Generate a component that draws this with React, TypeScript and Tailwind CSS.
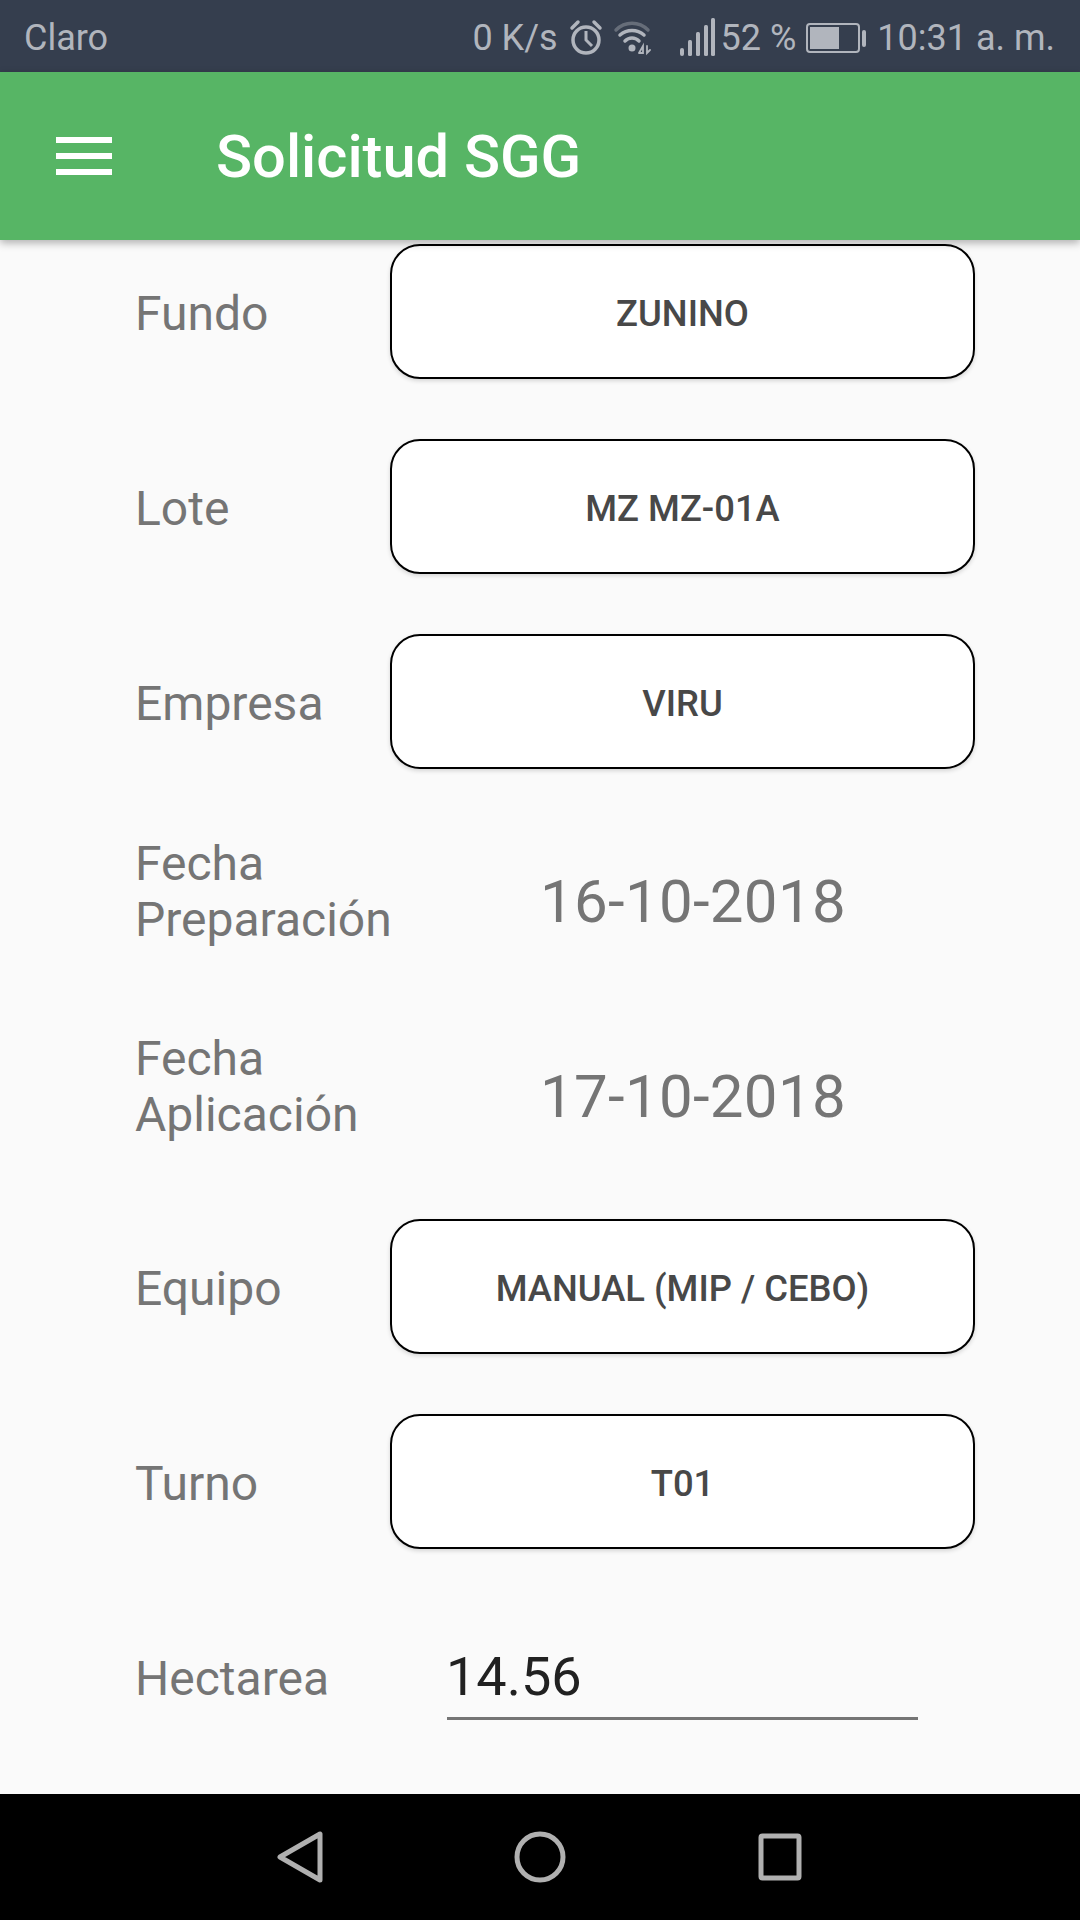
import React from "react";

const Label = ({ children, two }: { children: React.ReactNode; two?: boolean }) => (
  <div className={`w-[255px] text-[48px] leading-[56px] text-[#757575] ${two ? "pb-[9px]" : "pt-[4px]"}`}>{children}</div>
);

const Row = ({ label, two, children }: { label: React.ReactNode; two?: boolean; children: React.ReactNode }) => (
  <div className="flex h-[135px] items-center pl-[135px]">
    <Label two={two}>{label}</Label>
    {children}
  </div>
);

const Select = ({ value }: { value: string }) => (
  <div className="flex h-[135px] w-[585px] items-center justify-center rounded-[30px] border-2 border-black bg-white pt-[6px] text-[36.4px] font-medium text-[#484848] shadow-[0_2px_4px_rgba(0,0,0,0.15)]">
    {value}
  </div>
);

const DateValue = ({ value }: { value: string }) => (
  <div className="ml-[150px] pt-[11px] text-[60px] leading-[70px] tracking-[0.3px] text-[#757575]">{value}</div>
);

export default function App() {
  return (
    <div className="flex h-[1920px] w-[1080px] flex-col overflow-hidden bg-[#fafafa] font-['Roboto',sans-serif]">
      <div className="flex h-[72px] shrink-0 items-center justify-between bg-[#353e4e] pl-[24px] pr-[25px] pt-[3px] text-[36px] text-[#b1b5bd]">
        <span>Claro</span>
        <div className="flex items-center">
          <span>0 K/s</span>
          <svg className="ml-[11px]" width="34" height="38" viewBox="0 0 34 38" fill="none" stroke="#b1b5bd" strokeWidth="3.5">
            <circle cx="17" cy="21" r="13" />
            <path d="M17 12v9l6 6" strokeWidth="3" />
            <path d="M3 9l6-6M31 9l-6-6" strokeLinecap="round" />
          </svg>
          <svg className="ml-[10px]" width="38" height="36" viewBox="0 0 36 36" fill="none" strokeLinecap="round">
            <path d="M2 10C11 1 25 1 34 10" stroke="#666d79" strokeWidth="3.5" />
            <path d="M6 15C13 9 23 9 30 15" stroke="#b1b5bd" strokeWidth="3.5" />
            <path d="M11 21C15 17 21 17 25 21" stroke="#b1b5bd" strokeWidth="3.5" />
            <circle cx="18" cy="28" r="3.5" fill="#b1b5bd" />
            <path d="M25 33l4-7v7h-4M33 26v7l3-3" stroke="#b1b5bd" strokeWidth="1.8" />
          </svg>
          <svg className="ml-[29px]" width="36" height="40" viewBox="0 0 36 40" fill="#b1b5bd">
            <rect x="0" y="30" width="4" height="8" rx="2" />
            <rect x="8" y="22" width="4" height="16" rx="1.5" />
            <rect x="16" y="14" width="4" height="24" rx="1.5" />
            <rect x="24" y="7" width="4" height="31" rx="1.5" />
            <rect x="31" y="0" width="4" height="38" rx="1.5" />
          </svg>
          <span className="ml-[5px]">52 %</span>
          <svg className="ml-[10px]" width="61" height="36" viewBox="0 0 61 36" fill="none">
            <rect x="1" y="4" width="52" height="28" rx="3" stroke="#b1b5bd" strokeWidth="2" />
            <rect x="4" y="7" width="29" height="22" fill="#b1b5bd" />
            <rect x="56" y="10" width="4" height="17" rx="2" fill="#b1b5bd" />
          </svg>
          <span className="ml-[10px]">10:31 a. m.</span>
        </div>
      </div>

      <div className="relative z-10 flex h-[168px] shrink-0 items-center bg-[#57b565] shadow-[0_3px_8px_rgba(0,0,0,0.3)]">
        <div className="ml-[56px] flex w-[56px] flex-col gap-[10px]">
          <div className="h-[6px] bg-white" />
          <div className="h-[6px] bg-white" />
          <div className="h-[6px] bg-white" />
        </div>
        <div className="ml-[104px] pt-[3px] text-[59.6px] font-medium text-white">Solicitud SGG</div>
      </div>

      <div className="flex flex-1 flex-col gap-[60px] pt-[4px]">
        <Row label="Fundo"><Select value="ZUNINO" /></Row>
        <Row label="Lote"><Select value="MZ MZ-01A" /></Row>
        <Row label="Empresa"><Select value="VIRU" /></Row>
        <Row two label={<>Fecha<br />Preparación</>}><DateValue value="16-10-2018" /></Row>
        <Row two label={<>Fecha<br />Aplicación</>}><DateValue value="17-10-2018" /></Row>
        <Row label="Equipo"><Select value="MANUAL (MIP / CEBO)" /></Row>
        <Row label="Turno"><Select value="T01" /></Row>
        <Row label="Hectarea">
          <div className="ml-[57px] mb-[4px] flex h-[90px] w-[471px] items-center border-b-[3px] border-[#757575] pt-[6px] text-[54px] text-[#212121]">
            <span className="-ml-[1px]">14.56</span>
          </div>
        </Row>
      </div>

      <div className="flex h-[126px] shrink-0 items-center bg-black">
        <svg className="ml-[276px]" width="48" height="52" viewBox="0 0 48 52" fill="none" stroke="#b0b0b0" strokeWidth="5" strokeLinejoin="round">
          <path d="M44 3V49L4 26Z" />
        </svg>
        <svg className="ml-[190px]" width="52" height="52" viewBox="0 0 52 52" fill="none" stroke="#b0b0b0" strokeWidth="5">
          <circle cx="26" cy="26" r="23" />
        </svg>
        <svg className="ml-[192px]" width="44" height="48" viewBox="0 0 44 48" fill="none" stroke="#b0b0b0" strokeWidth="5" strokeLinejoin="round">
          <rect x="3" y="3" width="38" height="42" rx="1.5" />
        </svg>
      </div>
    </div>
  );
}
